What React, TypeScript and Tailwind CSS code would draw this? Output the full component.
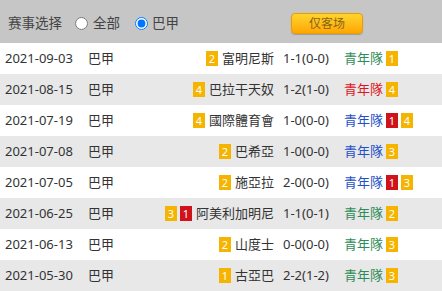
import React from "react";

type Badge = { n: number; red?: boolean };
type Row = {
  date: string;
  home: string;
  hb: Badge[];
  score: string;
  away: string;
  ac: string;
  ab: Badge[];
};

const rows: Row[] = [
  { date: "2021-09-03", home: "富明尼斯", hb: [{ n: 2 }], score: "1-1(0-0)", away: "青年隊", ac: "text-[#2e8b57]", ab: [{ n: 1 }] },
  { date: "2021-08-15", home: "巴拉干天奴", hb: [{ n: 4 }], score: "1-2(1-0)", away: "青年隊", ac: "text-[#e0141e]", ab: [{ n: 4 }] },
  { date: "2021-07-19", home: "國際體育會", hb: [{ n: 4 }], score: "1-0(0-0)", away: "青年隊", ac: "text-[#1e50c8]", ab: [{ n: 1, red: true }, { n: 4 }] },
  { date: "2021-07-08", home: "巴希亞", hb: [{ n: 2 }], score: "1-0(0-0)", away: "青年隊", ac: "text-[#1e50c8]", ab: [{ n: 3 }] },
  { date: "2021-07-05", home: "施亞拉", hb: [{ n: 2 }], score: "2-0(0-0)", away: "青年隊", ac: "text-[#1e50c8]", ab: [{ n: 1, red: true }, { n: 3 }] },
  { date: "2021-06-25", home: "阿美利加明尼", hb: [{ n: 3 }, { n: 1, red: true }], score: "1-1(0-1)", away: "青年隊", ac: "text-[#2e8b57]", ab: [{ n: 2 }] },
  { date: "2021-06-13", home: "山度士", hb: [{ n: 2 }], score: "0-0(0-0)", away: "青年隊", ac: "text-[#2e8b57]", ab: [{ n: 3 }] },
  { date: "2021-05-30", home: "古亞巴", hb: [{ n: 1 }], score: "2-2(1-2)", away: "青年隊", ac: "text-[#2e8b57]", ab: [{ n: 3 }] },
];

function B({ b }: { b: Badge }) {
  return (
    <span
      className={`inline-flex h-[15px] w-[12px] items-center justify-center text-[11px] leading-none text-white ${
        b.red ? "bg-[#d0121b]" : "bg-[#f5b400]"
      }`}
    >
      {b.n}
    </span>
  );
}

export default function App() {
  return (
    <div
      className="w-[442px] h-[291px] overflow-hidden bg-white text-[13px] text-[#333]"
      style={{ fontFamily: '"Noto Sans", "Noto Sans CJK SC", sans-serif' }}
    >
      <div className="flex h-[43px] items-center bg-[#c6c6c6] pl-[8px] pt-[4px] text-[13.5px] text-[#444]">
        <span>赛事选择</span>
        <label className="ml-[13px] flex items-center gap-[5px]">
          <input type="radio" name="m" className="m-0 h-[13px] w-[13px]" />
          <span>全部</span>
        </label>
        <label className="ml-[15px] flex items-center gap-[4px]">
          <input type="radio" name="m" defaultChecked className="m-0 h-[13px] w-[13px]" />
          <span>巴甲</span>
        </label>
        <button className="ml-[112px] flex h-[21px] w-[72px] items-center justify-center rounded-[4px] border border-[#e89c00] bg-gradient-to-b from-[#ffd52a] to-[#ffa500] text-[12px] text-[#8a6414] shadow-[0_1px_1px_rgba(0,0,0,0.2)]">
          仅客场
        </button>
      </div>
      {rows.map((r, i) => (
        <div
          key={i}
          className={`flex h-[31px] items-center ${i % 2 === 1 ? "bg-[#e8e8e8]" : "bg-white"}`}
        >
          <span className="w-[88px] pl-[5px]">{r.date}</span>
          <span className="w-[40px]">巴甲</span>
          <span className="flex w-[146px] items-center justify-end gap-[4px]">
            <span className="flex gap-[3px]">
              {r.hb.map((b, j) => (
                <B key={j} b={b} />
              ))}
            </span>
            <span>{r.home}</span>
          </span>
          <span className="ml-[9px] w-[61px]">{r.score}</span>
          <span className={r.ac}>{r.away}</span>
          <span className="ml-[3px] flex gap-[3px]">
            {r.ab.map((b, j) => (
              <B key={j} b={b} />
            ))}
          </span>
        </div>
      ))}
    </div>
  );
}
